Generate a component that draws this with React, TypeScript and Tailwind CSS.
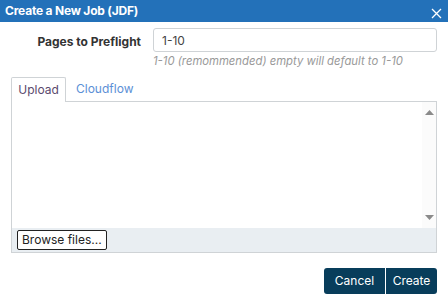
import React, { useState } from 'react';

export default function App() {
  const [pages, setPages] = useState('1-10');
  const [tab, setTab] = useState<'upload' | 'cloudflow'>('upload');

  return (
    <div className="w-[448px] h-[302px] bg-white font-['Inter','Noto_Sans',sans-serif] text-[#333]">
      {/* 헤더 */}
      <div className="h-[22px] bg-[#2371b9] flex items-center justify-between pl-[5px] pr-[4px]">
        <span className="text-white font-bold text-[12px] tracking-[-0.2px]">Create a New Job (JDF)</span>
        <button className="text-white w-[16px] h-[16px] flex items-center justify-center mt-[5px]">
          <svg width="11" height="11" viewBox="0 0 11 11" stroke="white" strokeWidth="1.3">
            <path d="M1 1 L10 10 M10 1 L1 10" />
          </svg>
        </button>
      </div>

      <div className="px-[11px]">
        {/* 페이지 입력 */}
        <div className="flex items-start mt-[6px]">
          <label className="w-[142px] shrink-0 text-right font-bold text-[12px] text-[#333] pt-[5px] pr-[12px]">
            Pages to Preflight
          </label>
          <div className="flex-1">
            <input
              value={pages}
              onChange={e => setPages(e.target.value)}
              className="block w-full h-[24px] border border-[#cfd3d6] rounded-[3px] px-[8px] text-[12px] text-[#444] outline-none"
            />
            <p className="italic text-[11.3px] text-[#999] mt-[2px] leading-[14px]">
              1-10 (remommended) empty will default to 1-10
            </p>
          </div>
        </div>

        {/* 탭 */}
        <div className="flex mt-[9px] h-[24px]">
          <button
            onClick={() => setTab('upload')}
            className={`w-[55px] h-[25px] text-[12px] border border-[#cfd3d6] border-b-0 rounded-t-[2px] bg-white relative z-10 ${
              tab === 'upload' ? 'text-[#5a4a6e]' : 'text-[#4a90d9]'
            }`}
          >
            Upload
          </button>
          <button
            onClick={() => setTab('cloudflow')}
            className={`px-[10px] h-[24px] text-[12px] ${tab === 'cloudflow' ? 'text-[#5a4a6e]' : 'text-[#5b8fd6]'}`}
          >
            Cloudflow
          </button>
        </div>

        {/* 업로드 영역 */}
        <div className="border border-[#cfd3d6] h-[152px] flex flex-col">
          <div className="flex-1 flex">
            <div className="flex-1"></div>
            <div className="w-[14px] bg-[#fbfbfb] flex flex-col items-center justify-between py-[8px]">
              <svg width="9" height="5" viewBox="0 0 9 5">
                <path d="M0 5 L4.5 0 L9 5 Z" fill="#8a8a8a" />
              </svg>
              <svg width="9" height="5" viewBox="0 0 9 5">
                <path d="M0 0 L4.5 5 L9 0 Z" fill="#8a8a8a" />
              </svg>
            </div>
          </div>
          <div className="h-[24px] bg-[#e9eef2] flex items-center pl-[5px]">
            <button className="h-[20px] px-[4px] border border-[#222] rounded-[2px] bg-white text-[12px] text-[#222] leading-none">
              Browse files...
            </button>
          </div>
        </div>

        {/* 버튼 */}
        <div className="flex justify-end mt-[15px]">
          <button className="w-[61px] h-[26px] bg-[#083d5b] text-white text-[12px] rounded-l-[3px]">Cancel</button>
          <button className="w-[51px] h-[26px] bg-[#083d5b] text-white text-[12px] rounded-r-[3px] ml-px">Create</button>
        </div>
      </div>
    </div>
  );
}
